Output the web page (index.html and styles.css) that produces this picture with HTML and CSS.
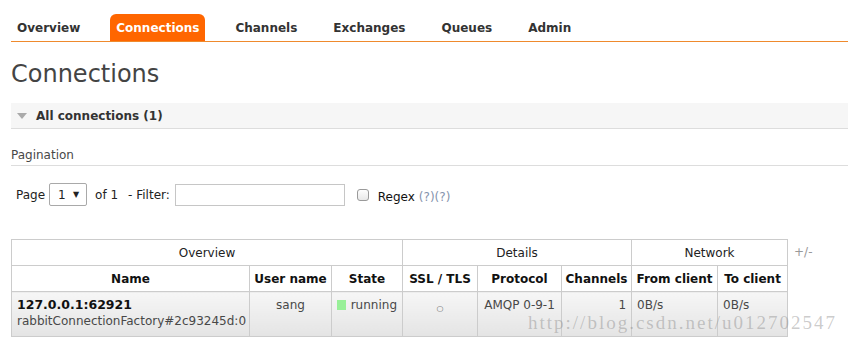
FILE: index.html
```html
<!DOCTYPE html>
<html>
<head>
<meta charset="utf-8">
<link rel="stylesheet" href="styles.css">
</head>
<body>
<div class="page">
  <ul class="tabs">
    <li><a>Overview</a></li>
    <li class="active"><a>Connections</a></li>
    <li><a>Channels</a></li>
    <li><a>Exchanges</a></li>
    <li><a>Queues</a></li>
    <li><a>Admin</a></li>
  </ul>
  <h1 class="title">Connections</h1>
  <div class="section-head">
    <span class="arrow"></span>
    <span>All connections (1)</span>
  </div>
  <div class="pagination-head">Pagination</div>
  <div class="filter-row">
    <span>Page</span>
    <span class="select"><span>1</span><span class="caret">&#9660;</span></span>
    <span class="of">of 1</span>
    <span class="dash">- Filter:</span>
    <span class="input"></span>
    <span class="checkbox"></span>
    <span class="regex">Regex</span>
    <span class="help">(?)(?)</span>
  </div>
  <div class="table-row">
    <table class="list">
      <colgroup>
        <col class="c-name"><col class="c-user"><col class="c-state"><col class="c-ssl"><col class="c-proto"><col class="c-chan"><col class="c-from"><col class="c-to">
      </colgroup>
      <thead>
        <tr class="group">
          <th colspan="3">Overview</th>
          <th colspan="3">Details</th>
          <th colspan="2">Network</th>
        </tr>
        <tr class="cols">
          <th>Name</th>
          <th>User name</th>
          <th>State</th>
          <th>SSL / TLS</th>
          <th>Protocol</th>
          <th>Channels</th>
          <th>From client</th>
          <th>To client</th>
        </tr>
      </thead>
      <tbody>
        <tr>
          <td class="name"><b>127.0.0.1:62921</b><br>rabbitConnectionFactory#2c93245d:0</td>
          <td class="center">sang</td>
          <td><span class="state"><span class="dot"></span>running</span></td>
          <td class="center ssl">&#9675;</td>
          <td class="center">AMQP 0-9-1</td>
          <td class="right">1</td>
          <td>0B/s</td>
          <td>0B/s</td>
        </tr>
      </tbody>
    </table>
    <span class="plusminus">+/-</span>
  </div>
  <div class="watermark">http://blog.csdn.net/u012702547</div>
</div>
</body>
</html>
```

FILE: styles.css
```css
html, body {
  margin: 0;
  padding: 0;
  background: #fff;
}
body {
  font-family: "DejaVu Sans", Verdana, sans-serif;
  font-size: 12px;
  color: #484848;
}
.page {
  position: relative;
  padding-left: 11px;
  padding-top: 14px;
}
.tabs {
  list-style: none;
  margin: 0;
  padding: 0;
  display: flex;
  gap: 24px;
  border-bottom: 1px solid #ef8a2d;
}
.tabs li a {
  display: block;
  padding: 0 6px;
  height: 27px;
  line-height: 28px;
  font-weight: bold;
  color: #333;
  border-radius: 6px 6px 0 0;
}
.tabs li.active a {
  background: #ff6600;
  color: #fff;
}
.title {
  font-size: 24px;
  font-weight: normal;
  margin: 18px 0 0 0;
  line-height: 29px;
  color: #444;
}
.section-head {
  margin-top: 14px;
  height: 25px;
  background: #f6f6f6;
  border-bottom: 1px solid #dddddd;
  display: flex;
  align-items: center;
  gap: 9px;
  padding-left: 6px;
  font-weight: bold;
  color: #333;
}
.arrow {
  width: 0;
  height: 0;
  border-left: 5px solid transparent;
  border-right: 5px solid transparent;
  border-top: 6px solid #aaa;
}
.pagination-head {
  margin-top: 19px;
  padding-bottom: 3px;
  border-bottom: 1px solid #dddddd;
  line-height: 14px;
}
.filter-row {
  margin-top: 17px;
  display: flex;
  align-items: center;
  height: 23px;
  padding-left: 5px;
  color: #222;
}
.select {
  margin-left: 4px;
  border: 1px solid #a9a9a9;
  border-radius: 2px;
  display: flex;
  align-items: center;
  justify-content: space-between;
  padding: 0 7px 0 8px;
  box-sizing: border-box;
  width: 38px;
  height: 23px;
}
.caret {
  font-size: 8px;
  color: #222;
}
.of {
  margin-left: 8px;
}
.dash {
  margin-left: 10px;
}
.input {
  margin-left: 5px;
  width: 170px;
  height: 22px;
  box-sizing: border-box;
  border: 1px solid #c6c6c6;
}
.checkbox {
  margin-left: 12px;
  width: 12px;
  height: 12px;
  box-sizing: border-box;
  border: 1px solid #9a9a9a;
  border-radius: 3px;
  background: linear-gradient(#fdfdfd, #e8e8e8);
  margin-top: 1px;
}
.regex {
  margin-left: 9px;
  margin-top: 4px;
  color: #111;
}
.help {
  margin-left: 4px;
  margin-top: 4px;
  color: #8594ad;
}
.table-row {
  margin-top: 33px;
  display: flex;
  align-items: flex-start;
  gap: 6px;
}
.list {
  border-collapse: collapse;
  table-layout: fixed;
  width: 777px;
  color: #484848;
}
.c-name { width: 238px; }
.c-user { width: 82px; }
.c-state { width: 71px; }
.c-ssl { width: 75px; }
.c-proto { width: 84px; }
.c-chan { width: 70px; }
.c-from { width: 86px; }
.c-to { width: 70px; }
.list th, .list td {
  border: 1px solid #cccccc;
  padding: 0 5px;
  white-space: nowrap;
  overflow: hidden;
}
.list tr.group th {
  font-weight: normal;
  height: 25px;
  color: #222;
}
.list tr.cols th {
  font-weight: bold;
  height: 25px;
  color: #111;
  padding: 0 3px;
}
.list tbody td {
  background: linear-gradient(#f6f6f6, #e4e4e4);
  vertical-align: top;
  padding-top: 5px;
  padding-bottom: 5px;
  height: 30px;
  line-height: 16px;
}
.list td.name b {
  color: #111;
  font-size: 12.5px;
}
.center { text-align: center; }
.right { text-align: right; }
.ssl { font-size: 8px; color: #666; padding-top: 9px !important; }
.state {
  display: flex;
  align-items: center;
  gap: 5px;
}
.dot {
  width: 10px;
  height: 10px;
  background: #98f098;
}
.plusminus {
  margin-top: 6px;
  color: #999;
}
.watermark {
  position: absolute;
  left: 528px;
  top: 312px;
  font-family: "Liberation Serif", serif;
  font-size: 19px;
  letter-spacing: 2px;
  color: rgba(140, 140, 140, 0.45);
  white-space: nowrap;
}
```
